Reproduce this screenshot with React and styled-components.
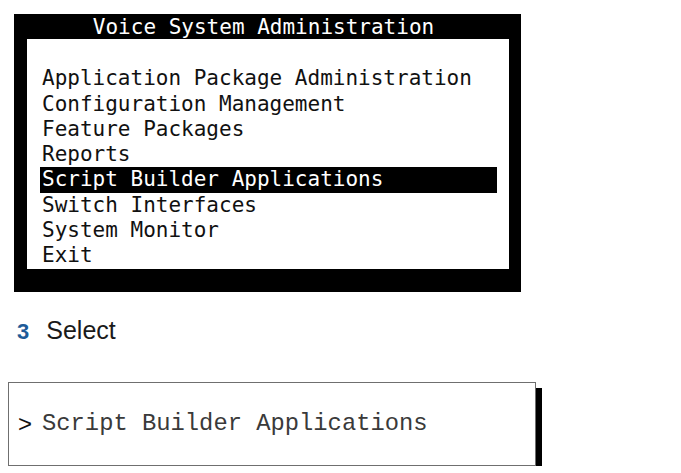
import styled, { createGlobalStyle } from "styled-components";

const GlobalStyle = createGlobalStyle`
  html, body {
    margin: 0;
    padding: 0;
    background: #ffffff;
  }
`;

const Page = styled.div`
  display: flex;
  flex-direction: column;
  align-items: flex-start;
  padding: 14px 0 0 0;
`;

/* terminal style menu screen */
const Terminal = styled.div`
  box-sizing: border-box;
  width: 507px;
  margin-left: 14px;
  background: #000;
  padding: 0 12px 23px 13px;
  font-family: "DejaVu Sans Mono", "Liberation Mono", monospace;
  font-size: 21px;
`;

const TerminalTitle = styled.div`
  height: 25px;
  line-height: 25px;
  padding: 1px 9px 0 0;
  box-sizing: border-box;
  color: #fff;
  text-align: center;
  white-space: pre;
`;

const Screen = styled.div`
  background: #fff;
  padding-top: 2px;
  display: flex;
  flex-direction: column;
`;

const MenuRow = styled.div`
  height: 25.3px;
  line-height: 25.3px;
  margin: 0 12px 0 13px;
  padding-left: 2px;
  white-space: pre;
  color: ${(p) => (p.$active ? "#fff" : "#111")};
  background: ${(p) => (p.$active ? "#000" : "transparent")};
`;

const Step = styled.div`
  display: flex;
  align-items: baseline;
  gap: 17px;
  height: 30px;
  margin: 23px 0 0 17px;
  line-height: 30px;
  font-family: "Liberation Sans", Arial, sans-serif;
`;

const StepNumber = styled.span`
  font-size: 22px;
  font-weight: 700;
  color: #1d5b98;
`;

const StepText = styled.span`
  font-size: 25px;
  color: #1a1a1a;
`;

const Prompt = styled.div`
  box-sizing: border-box;
  width: 528px;
  height: 84px;
  margin: 37px 0 0 8px;
  border: 1px solid #6f6f6f;
  box-shadow: 6px 6px 0 #000;
  display: flex;
  align-items: center;
  padding: 0 0 0 9px;
`;

const Caret = styled.span`
  font-family: "Liberation Sans", Arial, sans-serif;
  font-size: 24px;
  color: #111;
  margin-right: 10px;
`;

const Command = styled.span`
  font-family: "Liberation Mono", "Courier New", monospace;
  font-size: 23.8px;
  color: #3a3a3a;
  white-space: pre;
`;

const items = [
  "",
  "Application Package Administration",
  "Configuration Management",
  "Feature Packages",
  "Reports",
  "Script Builder Applications",
  "Switch Interfaces",
  "System Monitor",
  "Exit",
];

export default function App() {
  return (
    <>
      <GlobalStyle />
      <Page>
        <Terminal>
          <TerminalTitle>Voice System Administration</TerminalTitle>
          <Screen>
            {items.map((label, i) => (
              <MenuRow key={i} $active={label === "Script Builder Applications"}>
                {label}
              </MenuRow>
            ))}
          </Screen>
        </Terminal>
        <Step>
          <StepNumber>3</StepNumber>
          <StepText>Select</StepText>
        </Step>
        <Prompt>
          <Caret>&gt;</Caret>
          <Command>Script Builder Applications</Command>
        </Prompt>
      </Page>
    </>
  );
}
